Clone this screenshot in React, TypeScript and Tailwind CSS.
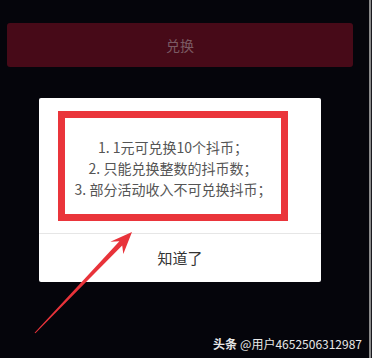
export default function App() {
  const rules = ["1. 1元可兑换10个抖币；", "2. 只能兑换整数的抖币数；", "3. 部分活动收入不可兑换抖币；"];

  return (
    <div
      className="relative flex h-[358px] w-[372px] overflow-hidden bg-[#05050b]"
      style={{ fontFamily: '"Noto Sans CJK SC", "Noto Sans", sans-serif' }}
    >
      <div className="flex w-[369px] flex-col pt-[23px]">
        <button className="ml-[7px] flex h-[44px] w-[346px] items-center justify-center rounded-[3px] bg-[#470a18] text-[14px] text-[#7b5a63]">
          兑换
        </button>

        <div className="ml-[39px] mt-[31px] flex w-[282px] flex-col rounded-[2px] bg-white">
          <div className="pb-[12px] pl-[19px] pr-[33px] pt-[13px]">
            <div className="flex flex-col items-center border-[7px] border-[#ea353b] pb-[14px] pt-[19px] text-[14px] leading-[21px] text-[#555555]">
              {rules.map((r) => (
                <p key={r}>{r}</p>
              ))}
            </div>
          </div>
          <div className="flex h-[49px] items-center justify-center border-t border-[#e6e6e6] text-[15px] text-[#333333]">
            知道了
          </div>
        </div>
      </div>
      <div className="w-[2px] bg-[#8a8a8a]" />
      <div className="w-[1px] bg-[#1a1a1f]" />

      <svg className="pointer-events-none absolute left-0 top-0" width="372" height="358" viewBox="0 0 372 358">
        <polygon
          fill="#e8333a"
          points="132,232 123.3,254.1 122.2,245.5 35.4,333.3 34.6,332.7 119.4,241.3 110.3,241.7"
        />
      </svg>

      <div className="absolute bottom-[6px] right-[10px] flex items-center gap-[3px] text-[12px] leading-[16px] text-[#e8e8e8]">
        <span className="font-bold">头条</span>
        <span>@用户4652506312987</span>
      </div>
    </div>
  );
}
